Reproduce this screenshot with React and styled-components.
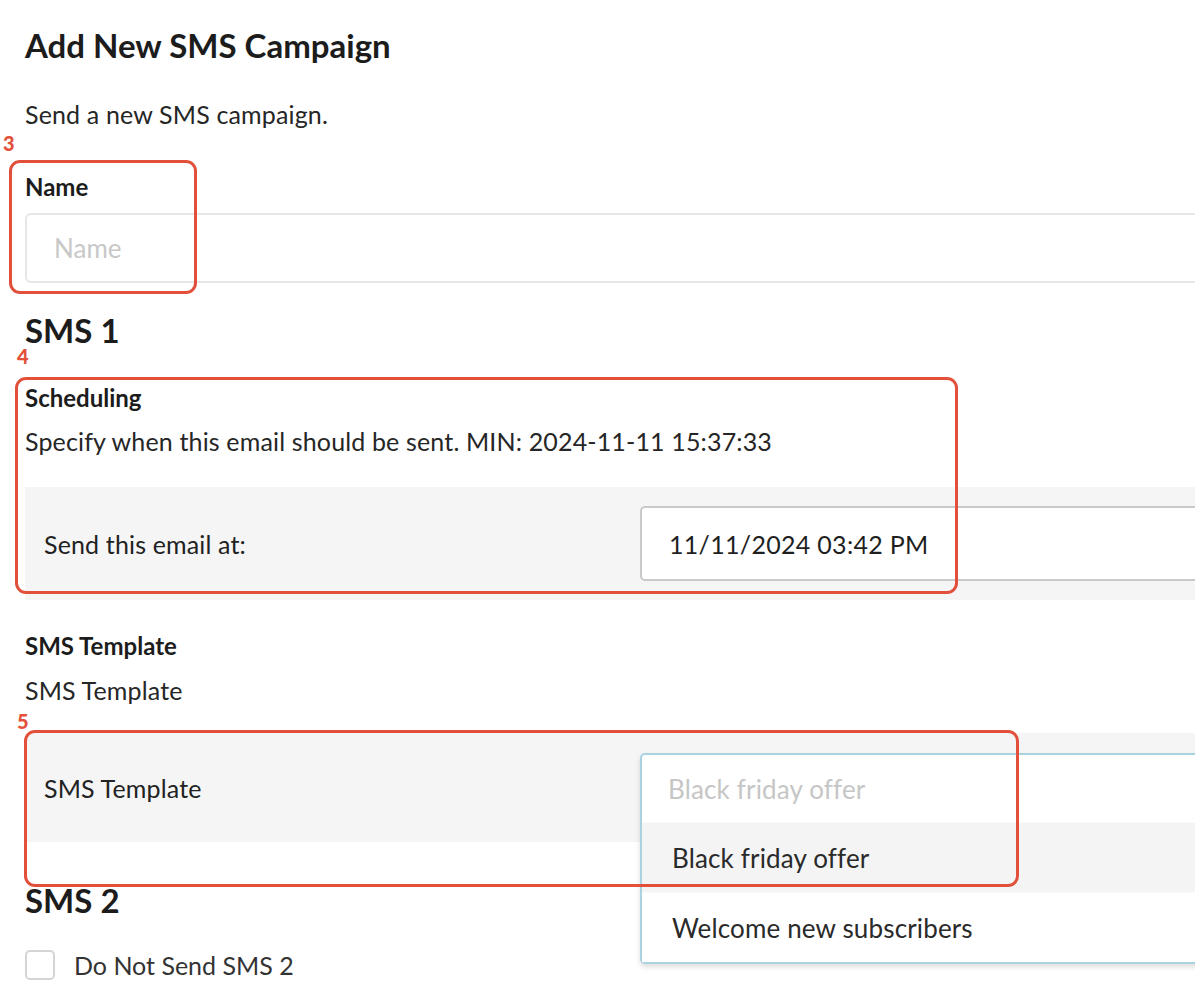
import React from "react";
import styled, { createGlobalStyle } from "styled-components";

const GlobalStyle = createGlobalStyle`
  html, body {
    margin: 0;
    padding: 0;
    background: #ffffff;
    overflow: hidden;
  }
  body {
    font-family: Lato, "Open Sans", "Liberation Sans", sans-serif;
    color: rgba(0, 0, 0, 0.87);
  }
`;

const Page = styled.div`
  position: relative;
  width: 1400px;
  padding: 25px 0 40px 25px;
  box-sizing: border-box;
`;

const Title = styled.h1`
  margin: 0;
  font-size: 33px;
  line-height: 40px;
  font-weight: 700;
  color: #1c1c1c;
`;

const Lead = styled.p`
  margin: ${(p) => p.$mt || 0}px 0 0;
  font-size: 25px;
  line-height: 30px;
  letter-spacing: 0.15px;
  color: #262626;
`;

const SectionTitle = styled.h2`
  margin: ${(p) => p.$mt}px 0 0;
  font-size: 33px;
  line-height: 40px;
  font-weight: 700;
  color: #1c1c1c;
`;

const FieldLabel = styled.div`
  margin-top: ${(p) => p.$mt}px;
  font-size: 24px;
  line-height: 28px;
  font-weight: 700;
  color: #1c1c1c;
`;

const TextInput = styled.input`
  display: block;
  margin-top: 12px;
  width: 100%;
  height: 70px;
  box-sizing: border-box;
  padding: 0 27px;
  border: 2px solid #e6e6e6;
  border-radius: 6px;
  font-family: inherit;
  font-size: 26px;
  color: #222;
  outline: none;
  &::placeholder {
    color: #c8c8c8;
  }
`;

const FieldRow = styled.div`
  margin-top: ${(p) => p.$mt}px;
  display: grid;
  grid-template-columns: 596px 1fr;
  align-items: center;
  padding: ${(p) => p.$pad}px 0 ${(p) => p.$pad}px 19px;
  background: #f5f5f5;
  font-size: 25px;
  letter-spacing: 0.15px;
  color: #222;
`;

const DateBox = styled.div`
  height: 75px;
  box-sizing: border-box;
  display: flex;
  align-items: center;
  padding: 0 27px;
  background: #fff;
  border: 2px solid #c9c9c9;
  border-radius: 5px;
  font-size: 25px;
  letter-spacing: 0.3px;
  color: #1f1f1f;
`;

const SelectWrap = styled.div`
  position: relative;
  height: 69px;
`;

const SelectControl = styled.div`
  position: absolute;
  left: 0;
  right: 0;
  top: 0;
  background: #fff;
  border: 2px solid #a9d3e3;
  border-radius: 5px;
  box-shadow: 0 3px 5px rgba(34, 36, 38, 0.15);
  z-index: 2;
`;

const Placeholder = styled.div`
  height: 67px;
  display: flex;
  align-items: center;
  padding-left: 26px;
  color: #c6c6c6;
  font-size: 26px;
`;

const Option = styled.div`
  height: 69px;
  display: flex;
  align-items: center;
  padding-left: 30px;
  font-size: 26px;
  color: #2a2a2a;
  background: ${(p) => (p.$active ? "#f4f4f4" : "#fff")};
  border-top: 1px solid #fafafa;
`;

const CheckRow = styled.label`
  margin-top: 30px;
  display: flex;
  align-items: center;
  gap: 19px;
  font-size: 25px;
  color: #333;
`;

const Box = styled.span`
  width: 30px;
  height: 30px;
  box-sizing: border-box;
  border: 2px solid #d4d4d4;
  border-radius: 5px;
  background: #fff;
`;

const Marker = styled.div`
  position: absolute;
  left: ${(p) => p.$x}px;
  top: ${(p) => p.$y}px;
  width: ${(p) => p.$w}px;
  height: ${(p) => p.$h}px;
  border: 3px solid #e2503c;
  border-radius: 11px;
  box-sizing: border-box;
  pointer-events: none;
  z-index: 5;
`;

const MarkerNum = styled.span`
  position: absolute;
  left: ${(p) => p.$x}px;
  top: ${(p) => p.$y}px;
  font-family: Lato, "Liberation Sans", sans-serif;
  font-size: 20px;
  line-height: 20px;
  font-weight: 900;
  color: #e4513b;
  z-index: 5;
`;

export default function App() {
  return (
    <Page>
      <GlobalStyle />
      <Title>Add New SMS Campaign</Title>
      <Lead $mt={34}>Send a new SMS campaign.</Lead>

      <FieldLabel $mt={44}>Name</FieldLabel>
      <TextInput placeholder="Name" />

      <SectionTitle $mt={27}>SMS 1</SectionTitle>
      <FieldLabel $mt={34}>Scheduling</FieldLabel>
      <Lead $mt={14}>Specify when this email should be sent. MIN: 2024-11-11 15:37:33</Lead>
      <FieldRow $mt={31} $pad={19}>
        <span>Send this email at:</span>
        <DateBox>11/11/2024 03:42 PM</DateBox>
      </FieldRow>

      <FieldLabel $mt={32}>SMS Template</FieldLabel>
      <Lead $mt={15}>SMS Template</Lead>
      <FieldRow $mt={28} $pad={20}>
        <span>SMS Template</span>
        <SelectWrap>
          <SelectControl>
            <Placeholder>Black friday offer</Placeholder>
            <Option $active>Black friday offer</Option>
            <Option>Welcome new subscribers</Option>
          </SelectControl>
        </SelectWrap>
      </FieldRow>

      <SectionTitle $mt={38}>SMS 2</SectionTitle>
      <CheckRow>
        <Box />
        Do Not Send SMS 2
      </CheckRow>

      <MarkerNum $x={3} $y={133}>3</MarkerNum>
      <Marker $x={9} $y={160} $w={188} $h={134} />
      <MarkerNum $x={17} $y={346}>4</MarkerNum>
      <Marker $x={15} $y={377} $w={943} $h={217} />
      <MarkerNum $x={17} $y={711}>5</MarkerNum>
      <Marker $x={24} $y={730} $w={995} $h={157} />
    </Page>
  );
}
